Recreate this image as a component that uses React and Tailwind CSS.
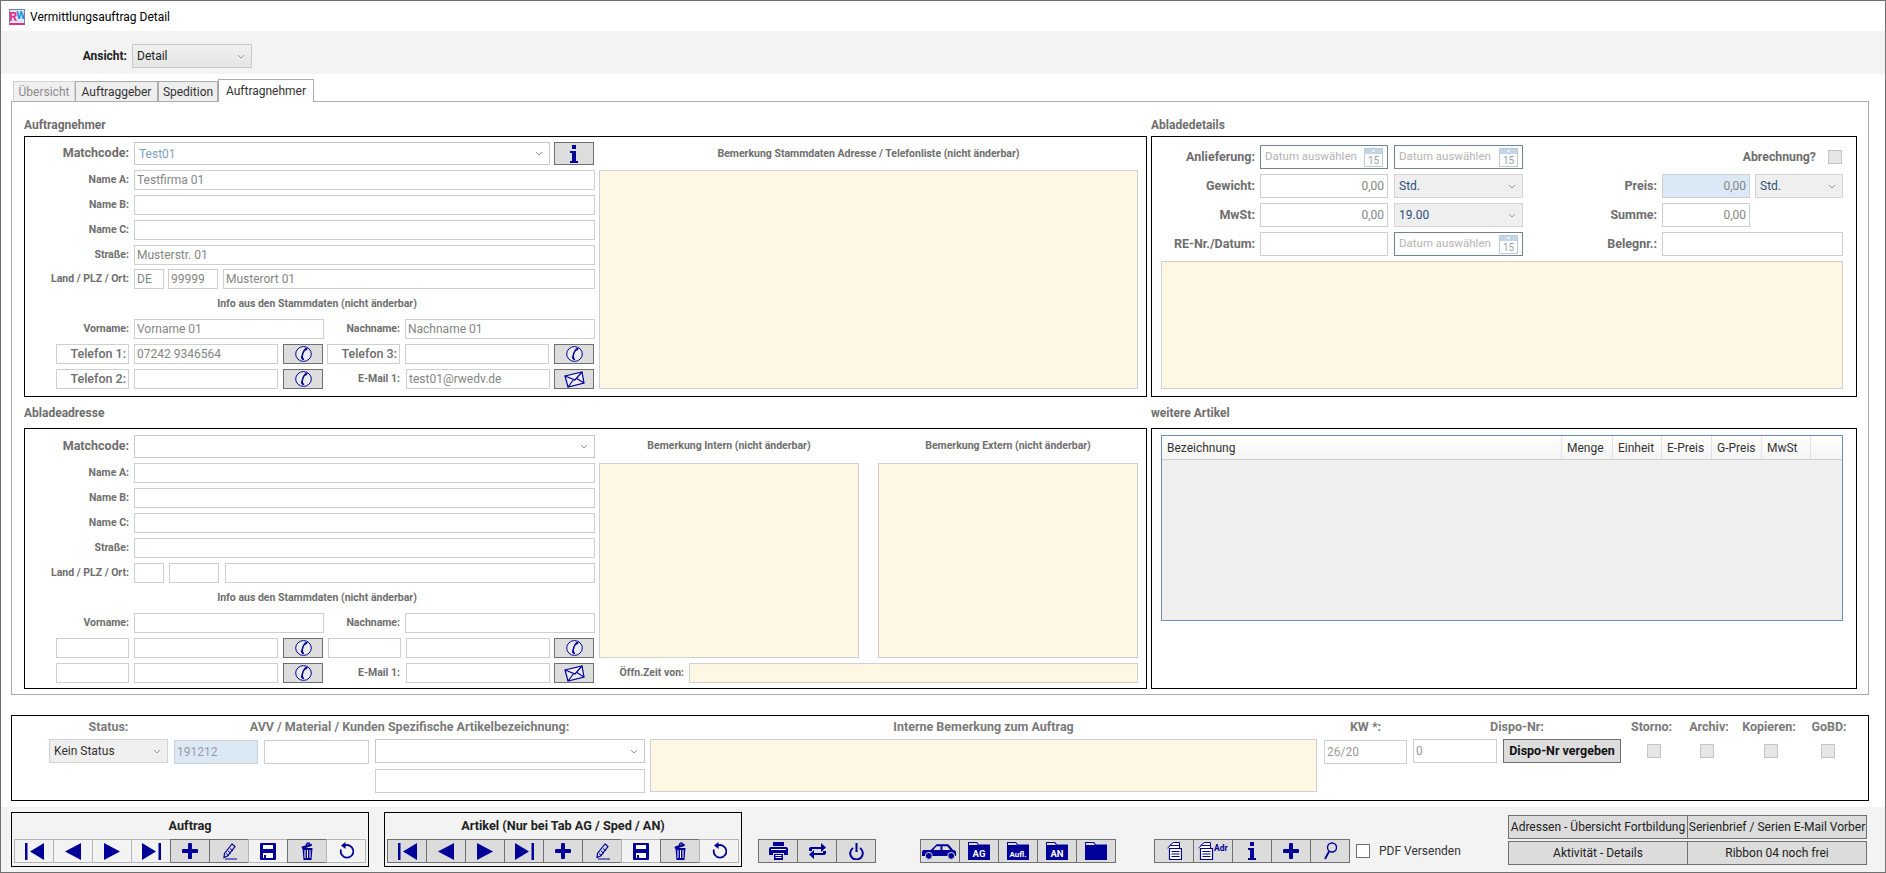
import React from 'react';

const NAVY = '#000099';

// --- icons ---
const Chevron = () => (
  <svg width="8" height="5" viewBox="0 0 8 5" className="shrink-0">
    <path d="M1 1l3 3 3-3" fill="none" stroke="#9a9a9a" strokeWidth="1" />
  </svg>
);

const Svg = ({ w = 20, h = 18, vb, children }) => (
  <svg width={w} height={h} viewBox={vb || `0 0 ${w} ${h}`} fill={NAVY}>{children}</svg>
);

const FirstIcon = () => <Svg w={19} h={17}><path d="M0 0h2.500v17H0zM19 0v17L5 8.500z" /></Svg>;
const PrevIcon = () => <Svg w={16} h={17}><path d="M16 0v17L0 8.500z" /></Svg>;
const NextIcon = () => <Svg w={16} h={17}><path d="M0 0v17l16-8.500z" /></Svg>;
const LastIcon = () => <Svg w={19} h={17}><path d="M16.500 0H19v17h-2.500zM0 0v17l14-8.500z" /></Svg>;
const PlusIcon = () => <Svg w={16} h={16}><path d="M6 1.500a2 2 0 014 0V6h4.500a2 2 0 010 4H10v4.500a2 2 0 01-4 0V10H1.500a2 2 0 010-4H6z" /></Svg>;
const PencilIcon = () => (
  <Svg w={15} h={17}>
    <path d="M10 1l3 2.500-7.500 9.500L2 14.500l.5-4z" fill="#d8d8e8" stroke={NAVY} strokeWidth="1.200" />
    <path d="M4 10.500l3 2.500M6 8l3 2.500M8 5.500l3 2.500" stroke={NAVY} strokeWidth="1" />
    <path d="M3 16h12" stroke={NAVY} strokeWidth="1" />
  </Svg>
);
const SaveIcon = () => (
  <Svg w={16} h={17}>
    <path d="M1 0h14a1 1 0 011 1v15a1 1 0 01-1 1H1a1 1 0 01-1-1V1a1 1 0 011-1z" />
    <path d="M3 2h10v4H3zM3 10h10v5H3z" fill="#ffffff" />
    <path d="M4 12h2v3H4z" />
  </Svg>
);
const TrashIcon = () => (
  <Svg w={13} h={18}>
    <path d="M1.500 6h10l-1 12h-8z" />
    <path d="M4 8v8M6.500 8v8M9 8v8" stroke="#ffffff" strokeWidth="1" />
    <path d="M1 5l9-3 .5 1.500-9 3zM5 3l1-2h3" fill={NAVY} stroke={NAVY} strokeWidth="1" />
  </Svg>
);
const UndoIcon = () => (
  <Svg w={15} h={18}>
    <path d="M5 3.800A6.300 6.300 0 112 7.500" fill="none" stroke={NAVY} strokeWidth="1.800" />
    <path d="M6.500 0v7L2 3.500z" />
  </Svg>
);
const PrintIcon = () => (
  <Svg w={19} h={18}>
    <path d="M4 0h11v4H4zM2 5h15a2 2 0 012 2v6h-4v-2H4v2H0V7a2 2 0 012-2zM5 12h9v6H5z" />
    <path d="M6.500 13.500h6M6.500 15.500h6" stroke="#ffffff" strokeWidth="1" />
    <path d="M2 7h15v1H2z" fill="#ffffff" />
  </Svg>
);
const RepeatIcon = () => (
  <Svg w={17} h={16}>
    <path d="M0 8V6a2 2 0 012-2h10V0l5 4.500L12 9V6H3v2zM17 8v2a2 2 0 01-2 2H5v4l-5-4.500L5 7v3h9V8z" />
  </Svg>
);
const PowerIcon = () => (
  <Svg w={15} h={17}>
    <path d="M4 5a6.300 6.300 0 107 0" fill="none" stroke={NAVY} strokeWidth="2" />
    <path d="M6.500 0h2v9h-2z" />
  </Svg>
);
const CarIcon = () => (
  <Svg w={39} h={17} vb="0 0 39 17">
    <path d="M1 13V9c0-1 1-2 2-2h7l5-5c.5-.5 1-1 2-1h10c1 0 1.500.500 2 1l4 5c2 0 3 1 3 2.500V13z" />
    <path d="M16 3h4v4h-7.500zM22 3h5l3 4h-8z" fill="#dddddd" />
    <circle cx="8" cy="13" r="3.500" stroke="#dddddd" />
    <circle cx="31" cy="13" r="3.500" stroke="#dddddd" />
  </Svg>
);
const FolderIcon = ({ label, small }) => (
  <svg width="22" height="18" viewBox="0 0 22 18">
    <path d="M0 0h9l2 2.500h11V5H0z" fill={NAVY} />
    <path d="M0 4h22v14H0z" fill={NAVY} />
    <path d="M1 1h7.500l1.500 2H1z" fill="#dddddd" />
    {label && (
      <text x="11" y="14.500" textAnchor="middle" fill="#ffffff" fontFamily="Roboto, sans-serif" fontWeight="700" fontSize={small ? 8 : 9.500}>
        {label}
      </text>
    )}
  </svg>
);
const DocsIcon = ({ label }) => (
  <svg width={label ? 30 : 15} height="18" viewBox={label ? '0 0 30 18' : '0 0 15 18'}>
    <path d="M2.500 3.500l4-3h6v3" fill="#ffffff" stroke={NAVY} strokeWidth="1" />
    <path d="M.5 6l3-2.500h9v4" fill="#ffffff" stroke={NAVY} strokeWidth="1" />
    <path d="M2.500 6.500h12v11h-12z" fill="#ffffff" stroke={NAVY} strokeWidth="1.200" />
    <path d="M4.500 9.500h8M4.500 12h8M4.500 14.500h8" stroke={NAVY} strokeWidth="1.200" />
    {label && (
      <text x="16" y="9" fill={NAVY} fontFamily="Roboto, sans-serif" fontWeight="700" fontSize="8.500">{label}</text>
    )}
  </svg>
);
const InfoIcon = () => (
  <Svg w={8} h={18}>
    <path d="M2 0h4v4H2zM0 6h6v10h2v2H0v-2h2V8H0z" />
  </Svg>
);
const SearchIcon = () => (
  <svg width="13" height="18" viewBox="0 0 13 18">
    <circle cx="8" cy="5.500" r="4.500" fill="none" stroke={NAVY} strokeWidth="1.400" />
    <path d="M5 9.500L1 17" stroke={NAVY} strokeWidth="1.800" />
  </svg>
);
const PhoneIcon = () => (
  <svg width="17" height="16" viewBox="0 0 17 16">
    <ellipse cx="8.500" cy="8" rx="7.800" ry="7.400" fill="#ffffff" fillOpacity=".45" stroke={NAVY} strokeWidth="1" />
    <path d="M10.800 3.200C8.600 4 6.800 9 7.200 12.400" fill="none" stroke={NAVY} strokeWidth="1.500" />
    <path d="M9.500 2.400l2.800-.7.300 1.100-1.700 2.100zM5.900 10.400l1.400-.2 2 3.400-1.100.6c-1.500-.5-2.300-2.300-2.300-3.800z" fill={NAVY} />
  </svg>
);
const MailIcon = () => (
  <svg width="21" height="17" viewBox="0 0 21 17">
    <path d="M1 5l17-4 2 11-16 4z" fill="#ffffff" fillOpacity=".5" stroke={NAVY} strokeWidth="1.200" />
    <path d="M1 5l10 4 7-8M4 16l6-8M20 12l-8-5" fill="none" stroke={NAVY} strokeWidth="1.200" />
  </svg>
);
const CalendarIcon = () => (
  <svg width="19" height="19" viewBox="0 0 19 19" className="shrink-0">
    <path d="M.5.500h18v18H.5z" fill="#ffffff" stroke="#c0c8d0" />
    <path d="M1 1h17v5H1z" fill="#c3d5e8" />
    <path d="M8.500 2h2v2h-2z" fill="#ffffff" />
    <text x="9.500" y="16" textAnchor="middle" fontFamily="Roboto, sans-serif" fontSize="10" fill="#9aa3ad">15</text>
  </svg>
);
const Logo = () => (
  <div className="w-[16px] h-[16px] bg-[#d6ecfa] border border-[#7f7f9f] border-b-2 border-b-[#ea2b7f] flex items-center justify-center leading-none overflow-hidden">
    <span className="text-[13px] font-bold text-[#ea2b7f] tracking-[-1px]">R</span>
    <span className="text-[11px] font-bold text-[#1d8fe0] tracking-[-1px] -mt-[2px]">W</span>
  </div>
);

// --- form pieces ---
const Field = ({ className = 'w-[461px]', value = '', right, bg = 'bg-white', color = 'text-[#858585]' }) => (
  <input
    readOnly
    value={value}
    className={`h-full shrink-0 border border-[#cfcfcf] px-[2px] text-[12px] outline-none ${bg} ${color} ${right ? 'text-right' : ''} ${className}`}
  />
);

const Combo = ({ className, value = '', bg = 'bg-white', color = 'text-[#858585]' }) => (
  <div className={`h-full shrink-0 border border-[#c8c8c8] pl-[4px] pr-[6px] flex items-center justify-between text-[12px] ${bg} ${color} ${className}`}>
    <span>{value}</span>
    <Chevron />
  </div>
);

const DateField = ({ className }) => (
  <div className={`h-full shrink-0 border border-[#6f8499] bg-white pl-[4px] pr-[4px] flex items-center justify-between text-[11.500px] text-[#b4b4b4] ${className}`}>
    <span>Datum auswählen</span>
    <CalendarIcon />
  </div>
);

const Label = ({ children, className = 'w-[104px]', size = 'text-[10.500px]' }) => (
  <div className={`shrink-0 text-right font-bold text-[#6e6e6e] whitespace-nowrap ${size} ${className}`}>{children}</div>
);

const Yellow = ({ className }) => <div className={`bg-[#fdf7e3] border border-[#d0d0d0] ${className}`} />;

const IconBtn = ({ children, className = '' }) => (
  <div className={`h-full w-[40px] shrink-0 border border-[#707070] bg-[#dddddd] flex items-center justify-center ${className}`}>{children}</div>
);

const LabelBox = ({ children, className = 'ml-[31px]' }) => (
  <div className={`h-full w-[73px] shrink-0 border border-[#cfcfcf] pr-[2px] flex items-center justify-end text-[12.500px] font-medium text-[#6e6e6e] ${className}`}>
    {children}
  </div>
);

const Row = ({ children, className = 'h-[20px] mb-[5px]' }) => <div className={`flex items-center ${className}`}>{children}</div>;

const Heading = ({ children, className }) => (
  <div className={`flex items-end text-[12px] font-bold text-[#6e6e6e] ${className}`}>{children}</div>
);

const SmallTitle = ({ children, className }) => (
  <div className={`text-center text-[10.500px] font-bold text-[#6e6e6e] ${className}`}>{children}</div>
);

const CheckBox = ({ className = '' }) => <div className={`w-[14px] h-[14px] shrink-0 bg-[#e6e6e6] border border-[#c4c4c4] ${className}`} />;

const ToolBtn = ({ active, children, first }) => (
  <div
    className={`w-[40px] h-full flex items-center justify-center border ${first ? '' : '-ml-px'} ${
      active ? 'bg-[#dcdcdc] border-[#707070]' : 'bg-[#f3f3f3] border-[#b4b4b4]'
    }`}
  >
    {children}
  </div>
);

const navIcons = [FirstIcon, PrevIcon, NextIcon, LastIcon, PlusIcon, PencilIcon, SaveIcon, TrashIcon, UndoIcon];

const NavBox = ({ title, active, className }) => (
  <div className={`w-[358px] h-[55px] border border-black shrink-0 ${className}`}>
    <div className="h-[26px] flex items-center justify-center text-[12.700px] font-bold text-[#222222]">{title}</div>
    <div className="flex h-[24px] ml-[2px]">
      {navIcons.map((Icon, i) => (
        <ToolBtn key={i} first={i === 0} active={active.includes(i)}><Icon /></ToolBtn>
      ))}
    </div>
  </div>
);

const ToolGroup = ({ className, items }) => (
  <div className={`flex h-[24px] mt-[32px] shrink-0 ${className}`}>
    {items.map((item, i) => (
      <ToolBtn key={i} first={i === 0} active>{item}</ToolBtn>
    ))}
  </div>
);

const RibbonBtn = ({ children, className }) => (
  <div className={`h-full bg-[#dcdcdc] border border-[#707070] flex items-center justify-center overflow-hidden whitespace-nowrap text-[12px] text-[#222222] ${className}`}>
    {children}
  </div>
);

const StatusLabel = ({ children, className }) => (
  <div className={`h-[23px] flex items-center justify-center text-[12.500px] font-bold text-[#7a7a7a] whitespace-nowrap ${className}`}>{children}</div>
);

const CheckCol = ({ label, className, boxClass }) => (
  <div className={`shrink-0 ${className}`}>
    <StatusLabel>{label}</StatusLabel>
    <div className="h-[24px] flex items-center justify-center">
      <CheckBox className={boxClass} />
    </div>
  </div>
);

const TableHead = ({ children, className }) => (
  <div className={`h-full border-r border-[#e2e2e2] pl-[5px] flex items-center text-[12px] text-[#333333] ${className}`}>{children}</div>
);

export default function App() {
  return (
    <div className="w-[1886px] h-[873px] overflow-hidden border border-[#707070] bg-white flex flex-col font-[family-name:Roboto,sans-serif]">
      {/* title bar */}
      <div className="h-[30px] shrink-0 flex items-center pl-[8px] pt-[1px] text-[12px] text-black">
        <Logo />
        <span className="ml-[5px]">Vermittlungsauftrag Detail</span>
      </div>

      {/* view selector */}
      <div className="h-[43px] shrink-0 bg-[#f3f3f3] flex items-start pt-[13px]">
        <Label className="w-[126px] leading-[24px]" size="text-[12px]"><span className="text-[#222222]">Ansicht:</span></Label>
        <div className="h-[24px] ml-[5px]">
          <Combo className="w-[120px] border-[#acacac] bg-gradient-to-b from-[#f0f0f0] to-[#e5e5e5]" bg="" value="Detail" color="text-[#222222]" />
        </div>
      </div>

      <div className="h-[733px] shrink-0 flex flex-col">
        {/* tabs */}
        <div className="h-[27px] shrink-0 flex items-end pl-[12px]">
          <div className="w-[62px] h-[20px] border border-[#d4d4d4] border-b-0 bg-[#f0f0f0] flex items-center justify-center text-[12px] text-[#8c8c8c]">Übersicht</div>
          <div className="w-[83px] h-[20px] border border-[#acacac] border-b-0 bg-[#eeeeee] flex items-center justify-center text-[12px] text-[#333333]">Auftraggeber</div>
          <div className="w-[60px] h-[20px] border border-[#acacac] border-b-0 bg-[#eeeeee] flex items-center justify-center text-[12px] text-[#333333]">Spedition</div>
          <div className="relative z-10 -mb-px w-[96px] h-[23px] border border-[#acacac] border-b-0 bg-white flex items-center justify-center text-[12px] text-[#333333]">Auftragnehmer</div>
        </div>

        {/* main panel */}
        <div className="ml-[10px] w-[1858px] h-[594px] shrink-0 border border-[#acacac] pl-[12px] grid grid-cols-[1123px_706px] gap-x-[4px] grid-rows-[34px_261px_31px_261px]">
          <Heading className="pb-[2px]">Auftragnehmer</Heading>
          <Heading className="pb-[2px]">Abladedetails</Heading>

          {/* Auftragnehmer */}
          <div className="border border-black flex">
            <div className="w-[570px] shrink-0 pt-[5px]">
              <Row className="h-[23px] mb-[5px]">
                <Label size="text-[12.500px]">Matchcode:</Label>
                <Combo className="w-[416px] ml-[5px]" value="Test01" color="text-[#7f9fc0]" />
                <IconBtn className="ml-[4px]"><InfoIcon /></IconBtn>
              </Row>
              <Row>
                <Label>Name A:</Label>
                <Field className="w-[461px] ml-[5px]" value="Testfirma 01" />
              </Row>
              <Row>
                <Label>Name B:</Label>
                <Field className="w-[461px] ml-[5px]" />
              </Row>
              <Row>
                <Label>Name C:</Label>
                <Field className="w-[461px] ml-[5px]" />
              </Row>
              <Row className="h-[20px] mb-[4px]">
                <Label>Straße:</Label>
                <Field className="w-[461px] ml-[5px]" value="Musterstr. 01" />
              </Row>
              <Row className="h-[20px]">
                <Label>Land / PLZ / Ort:</Label>
                <Field className="w-[30px] ml-[5px]" value="DE" />
                <Field className="w-[50px] ml-[4px]" value="99999" />
                <Field className="w-[372px] ml-[5px]" value="Musterort 01" />
              </Row>
              <SmallTitle className="h-[30px] pl-[14px] leading-[30px]">Info aus den Stammdaten (nicht änderbar)</SmallTitle>
              <Row>
                <Label>Vorname:</Label>
                <Field className="w-[190px] ml-[5px]" value="Vorname 01" />
                <Label className="w-[76px]">Nachname:</Label>
                <Field className="w-[190px] ml-[5px]" value="Nachname 01" />
              </Row>
              <Row>
                <LabelBox>Telefon 1:</LabelBox>
                <Field className="w-[144px] ml-[5px]" value="07242 9346564" />
                <IconBtn className="ml-[5px]"><PhoneIcon /></IconBtn>
                <LabelBox className="ml-[4px]">Telefon 3:</LabelBox>
                <Field className="w-[144px] ml-[5px]" />
                <IconBtn className="ml-[5px]"><PhoneIcon /></IconBtn>
              </Row>
              <Row className="h-[20px]">
                <LabelBox>Telefon 2:</LabelBox>
                <Field className="w-[144px] ml-[5px]" />
                <IconBtn className="ml-[5px]"><PhoneIcon /></IconBtn>
                <Label className="w-[77px]">E-Mail 1:</Label>
                <Field className="w-[144px] ml-[6px]" value="test01@rwedv.de" />
                <IconBtn className="ml-[4px]"><MailIcon /></IconBtn>
              </Row>
            </div>
            <div className="w-[539px] ml-[4px] shrink-0">
              <SmallTitle className="h-[33px] leading-[33px]">Bemerkung Stammdaten Adresse / Telefonliste (nicht änderbar)</SmallTitle>
              <Yellow className="h-[219px]" />
            </div>
          </div>

          {/* Abladedetails */}
          <div className="border border-black pt-[8px]">
            <Row className="h-[24px] mb-[5px]">
              <Label className="w-[103px]" size="text-[12.500px]">Anlieferung:</Label>
              <DateField className="w-[128px] ml-[5px]" />
              <DateField className="w-[129px] ml-[6px]" />
              <Label className="w-[293px]" size="text-[12.300px]">Abrechnung?</Label>
              <CheckBox className="ml-[12px]" />
            </Row>
            <Row className="h-[24px] mb-[5px]">
              <Label className="w-[103px]" size="text-[12.500px]">Gewicht:</Label>
              <Field className="w-[128px] ml-[5px] pr-[3px]" value="0,00" right />
              <Combo className="w-[129px] ml-[6px] border-[#d4d4d4]" bg="bg-[#efefef]" color="text-[#2b4f7a]" value="Std." />
              <Label className="w-[134px]" size="text-[12.500px]">Preis:</Label>
              <Field className="w-[88px] ml-[5px] pr-[3px]" value="0,00" right bg="bg-[#dbe9f7]" />
              <Combo className="w-[88px] ml-[5px] border-[#d4d4d4]" bg="bg-[#efefef]" color="text-[#2b4f7a]" value="Std." />
            </Row>
            <Row className="h-[24px] mb-[5px]">
              <Label className="w-[103px]" size="text-[12.500px]">MwSt:</Label>
              <Field className="w-[128px] ml-[5px] pr-[3px]" value="0,00" right />
              <Combo className="w-[129px] ml-[6px] border-[#d4d4d4]" bg="bg-[#efefef]" color="text-[#2b4f7a]" value="19.00" />
              <Label className="w-[134px]" size="text-[12.500px]">Summe:</Label>
              <Field className="w-[88px] ml-[5px] pr-[3px]" value="0,00" right />
            </Row>
            <Row className="h-[24px] mb-[5px]">
              <Label className="w-[103px]" size="text-[12.500px]">RE-Nr./Datum:</Label>
              <Field className="w-[128px] ml-[5px]" />
              <DateField className="w-[129px] ml-[6px]" />
              <Label className="w-[134px]" size="text-[12.500px]">Belegnr.:</Label>
              <Field className="w-[181px] ml-[5px]" />
            </Row>
            <Yellow className="ml-[9px] w-[682px] h-[128px]" />
          </div>

          <Heading className="pb-[6px]">Abladeadresse</Heading>
          <Heading className="pb-[6px]">weitere Artikel</Heading>

          {/* Abladeadresse */}
          <div className="border border-black flex">
            <div className="w-[570px] shrink-0 pt-[6px]">
              <Row className="h-[23px] mb-[5px]">
                <Label size="text-[12.500px]">Matchcode:</Label>
                <Combo className="w-[461px] ml-[5px]" />
              </Row>
              <Row>
                <Label>Name A:</Label>
                <Field className="w-[461px] ml-[5px]" />
              </Row>
              <Row>
                <Label>Name B:</Label>
                <Field className="w-[461px] ml-[5px]" />
              </Row>
              <Row>
                <Label>Name C:</Label>
                <Field className="w-[461px] ml-[5px]" />
              </Row>
              <Row>
                <Label>Straße:</Label>
                <Field className="w-[461px] ml-[5px]" />
              </Row>
              <Row className="h-[20px]">
                <Label>Land / PLZ / Ort:</Label>
                <Field className="w-[30px] ml-[5px]" />
                <Field className="w-[50px] ml-[5px]" />
                <Field className="w-[370px] ml-[6px]" />
              </Row>
              <SmallTitle className="h-[30px] pl-[14px] leading-[30px]">Info aus den Stammdaten (nicht änderbar)</SmallTitle>
              <Row>
                <Label>Vorname:</Label>
                <Field className="w-[190px] ml-[5px]" />
                <Label className="w-[76px]">Nachname:</Label>
                <Field className="w-[190px] ml-[5px]" />
              </Row>
              <Row>
                <LabelBox />
                <Field className="w-[144px] ml-[5px]" />
                <IconBtn className="ml-[5px]"><PhoneIcon /></IconBtn>
                <LabelBox className="ml-[5px]" />
                <Field className="w-[144px] ml-[5px]" />
                <IconBtn className="ml-[4px]"><PhoneIcon /></IconBtn>
              </Row>
              <Row className="h-[20px]">
                <LabelBox />
                <Field className="w-[144px] ml-[5px]" />
                <IconBtn className="ml-[5px]"><PhoneIcon /></IconBtn>
                <Label className="w-[77px]">E-Mail 1:</Label>
                <Field className="w-[144px] ml-[6px]" />
                <IconBtn className="ml-[4px]"><MailIcon /></IconBtn>
              </Row>
            </div>
            <div className="w-[539px] ml-[4px] shrink-0">
              <div className="flex gap-[19px]">
                <div className="w-[260px]">
                  <SmallTitle className="h-[34px] leading-[34px]">Bemerkung Intern (nicht änderbar)</SmallTitle>
                  <Yellow className="h-[195px]" />
                </div>
                <div className="w-[260px]">
                  <SmallTitle className="h-[34px] leading-[34px]">Bemerkung Extern (nicht änderbar)</SmallTitle>
                  <Yellow className="h-[195px]" />
                </div>
              </div>
              <Row className="h-[20px] mt-[5px]">
                <Label className="w-[85px]">Öffn.Zeit von:</Label>
                <Yellow className="h-full w-[449px] ml-[5px]" />
              </Row>
            </div>
          </div>

          {/* weitere Artikel */}
          <div className="border border-black pl-[9px] pt-[6px]">
            <div className="w-[682px] h-[186px] border border-[#6d8fb5] bg-[#efefef]">
              <div className="h-[24px] flex border-b border-[#d0d0d0] bg-gradient-to-b from-white to-[#f4f4f4]">
                <TableHead className="w-[400px]">Bezeichnung</TableHead>
                <TableHead className="w-[51px]">Menge</TableHead>
                <TableHead className="w-[49px]">Einheit</TableHead>
                <TableHead className="w-[50px]">E-Preis</TableHead>
                <TableHead className="w-[50px]">G-Preis</TableHead>
                <TableHead className="w-[49px]">MwSt</TableHead>
              </div>
            </div>
          </div>
        </div>

        {/* status section */}
        <div className="ml-[10px] mt-[20px] w-[1858px] h-[86px] shrink-0 border border-black flex pl-[37px]">
          <div className="w-[119px] shrink-0">
            <StatusLabel>Status:</StatusLabel>
            <div className="h-[24px]">
              <Combo className="w-[119px] border-[#d4d4d4]" bg="bg-[#efefef]" color="text-[#333333]" value="Kein Status" />
            </div>
          </div>
          <div className="w-[471px] ml-[6px] shrink-0">
            <StatusLabel>AVV / Material / Kunden Spezifische Artikelbezeichnung:</StatusLabel>
            <div className="flex">
              <div className="h-[24px]"><Field className="w-[84px]" value="191212" bg="bg-[#dbe9f7]" color="text-[#9a9a9a]" /></div>
              <div className="h-[24px] ml-[6px]"><Field className="w-[105px]" /></div>
              <div className="ml-[6px]">
                <div className="h-[24px]"><Combo className="w-[270px]" /></div>
                <div className="h-[24px] mt-[5px]"><Field className="w-[270px]" /></div>
              </div>
            </div>
          </div>
          <div className="w-[667px] ml-[5px] shrink-0">
            <StatusLabel>Interne Bemerkung zum Auftrag</StatusLabel>
            <Yellow className="h-[53px]" />
          </div>
          <div className="w-[83px] ml-[7px] shrink-0">
            <StatusLabel>KW *:</StatusLabel>
            <div className="h-[24px]"><Field className="w-[83px]" value="26/20" color="text-[#9a9a9a]" /></div>
          </div>
          <div className="w-[208px] ml-[6px] shrink-0">
            <StatusLabel>Dispo-Nr:</StatusLabel>
            <div className="flex h-[24px]">
              <Field className="w-[84px]" value="0" color="text-[#9a9a9a]" />
              <div className="ml-[6px] w-[118px] h-full border border-[#707070] bg-[#dddddd] flex items-center justify-center text-[12.500px] font-bold text-[#111111]">Dispo-Nr vergeben</div>
            </div>
          </div>
          <CheckCol label="Storno:" className="w-[61px]" boxClass="ml-[4px]" />
          <CheckCol label="Archiv:" className="w-[54px]" boxClass="-ml-[4px]" />
          <CheckCol label="Kopieren:" className="w-[66px]" boxClass="ml-[4px]" />
          <CheckCol label="GoBD:" className="w-[54px]" boxClass="-ml-[2px]" />
        </div>
      </div>

      {/* bottom toolbar */}
      <div className="h-[65px] shrink-0 bg-[#f3f3f3] flex items-start">
        <NavBox title="Auftrag" className="ml-[10px] mt-[5px]" active={[4, 5, 7]} />
        <NavBox title="Artikel (Nur bei Tab AG / Sped / AN)" className="ml-[15px] mt-[5px]" active={[0, 1, 2, 3, 4, 5, 7]} />
        <ToolGroup className="ml-[16px]" items={[<PrintIcon />, <RepeatIcon />, <PowerIcon />]} />
        <ToolGroup
          className="ml-[44px]"
          items={[<CarIcon />, <FolderIcon label="AG" />, <FolderIcon label="Aufl." small />, <FolderIcon label="AN" />, <FolderIcon />]}
        />
        <ToolGroup
          className="ml-[38px]"
          items={[<DocsIcon />, <DocsIcon label="Adr" />, <InfoIcon />, <PlusIcon />, <SearchIcon />]}
        />
        <div className="ml-[6px] mt-[34px] h-[20px] flex items-center text-[12px] text-[#333333]">
          <div className="w-[14px] h-[14px] bg-white border border-[#707070]" />
          <span className="ml-[9px]">PDF Versenden</span>
        </div>
        <div className="ml-auto mr-[18px] mt-[8px] w-[359px] flex flex-col gap-[2px]">
          <div className="flex h-[24px]">
            <RibbonBtn className="w-[180px]">Adressen - Übersicht Fortbildung</RibbonBtn>
            <RibbonBtn className="w-[180px] -ml-px">Serienbrief / Serien E-Mail Vorber</RibbonBtn>
          </div>
          <div className="flex h-[24px]">
            <RibbonBtn className="w-[180px]">Aktivität - Details</RibbonBtn>
            <RibbonBtn className="w-[180px] -ml-px">Ribbon 04 noch frei</RibbonBtn>
          </div>
        </div>
      </div>
    </div>
  );
}
